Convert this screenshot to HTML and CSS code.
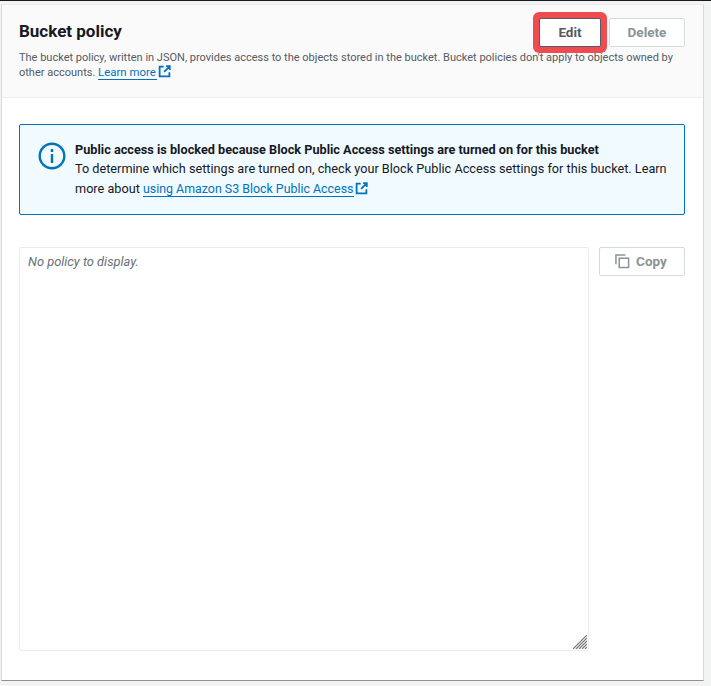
FILE: index.html
```html
<!DOCTYPE html>
<html lang="en">
<head>
    <meta charset="UTF-8">
    <meta name="viewport" content="width=device-width, initial-scale=1.0">
    <title>Bucket policy</title>
    <link rel="stylesheet" href="styles.css">
</head>
<body>
    <div class="card">
        <div class="card-header">
            <div class="header-top">
                <h2>Bucket policy</h2>
                <div class="actions">
                    <button class="btn btn-edit">Edit</button>
                    <button class="btn btn-disabled btn-delete">Delete</button>
                </div>
            </div>
            <p class="description">The bucket policy, written in JSON, provides access to the objects stored in the bucket. Bucket policies don't apply to objects owned by other accounts. <a href="#" class="link">Learn more</a><svg class="ext-icon" viewBox="0 0 16 16"><path d="M7 2H2v12h12V9M10 1.5h4.5V6M14.5 1.5L7.5 8.5"/></svg></p>
        </div>

        <div class="card-body">
            <div class="alert">
                <svg class="alert-icon" viewBox="0 0 28 28"><circle cx="14" cy="14" r="12.3"/><path d="M14 12v9M14 7v3"/></svg>
                <div class="alert-text">
                    <strong>Public access is blocked because Block Public Access settings are turned on for this bucket</strong>
                    <p>To determine which settings are turned on, check your Block Public Access settings for this bucket. Learn more about <a href="#" class="link">using Amazon S3 Block Public Access</a><svg class="ext-icon" viewBox="0 0 16 16"><path d="M7 2H2v12h12V9M10 1.5h4.5V6M14.5 1.5L7.5 8.5"/></svg></p>
                </div>
            </div>

            <div class="policy-row">
                <div class="policy-box">
                    <span class="placeholder">No policy to display.</span>
                    <svg class="resize-grip" viewBox="0 0 14 14"><path d="M0 14L14 0M3 14L14 3M6 14L14 6M9 14L14 9M12 14L14 12"/></svg>
                </div>
                <button class="btn btn-disabled btn-copy">
                    <svg class="copy-icon" viewBox="0 0 16 16"><path d="M1 11V1h10"/><path d="M4.5 4.5h10v10h-10z"/></svg>
                    Copy
                </button>
            </div>
        </div>
    </div>
</body>
</html>
```

FILE: styles.css
```css
* {
    margin: 0;
    padding: 0;
    box-sizing: border-box;
}

html, body {
    height: 100%;
}

body {
    font-family: Roboto, 'Open Sans', sans-serif;
    background: #f2f3f3;
    border-top: 1px solid #16191f;
    padding: 3px 7px 5px 1px;
    color: #16191f;
    font-size: 12.7px;
}

.card {
    background: #fff;
    height: 100%;
    border-left: 1px solid #d5dbdb;
    border-right: 1px solid #d5dbdb;
    border-bottom: 1px solid #879596;
    border-top: 1px solid #eaeded;
}

.card-header {
    background: #fafafa;
    height: 93px;
    border-bottom: 1px solid #eaeded;
    padding: 13px 18px 0 17px;
}

.header-top {
    display: flex;
    justify-content: space-between;
    align-items: flex-start;
    height: 33px;
}

h2 {
    font-size: 17px;
    font-weight: 700;
    line-height: 27px;
}

.actions {
    display: flex;
    gap: 8px;
}

.btn {
    font-family: inherit;
    font-size: 13.5px;
    font-weight: 700;
    background: #fff;
    border-radius: 2px;
    height: 29px;
    padding-bottom: 1px;
}

.btn-edit {
    width: 62px;
    color: #545b64;
    border: 1px solid #545b64;
    box-shadow: 0 0 0 6px #ee4c50;
    border-radius: 2px;
}

.btn-disabled {
    color: #879596;
    border: 1px solid #d5dbdb;
}

.btn-delete {
    width: 76px;
}

.description {
    font-size: 11px;
    line-height: 14px;
    color: #545b64;
    width: 665px;
}

.description .link {
    font-size: 11.4px;
}

.link {
    color: #0073bb;
    text-decoration: none;
    border-bottom: 1px solid #0073bb;
    padding-right: 1px;
}

.ext-icon {
    width: 13px;
    height: 13px;
    margin-left: 1px;
    vertical-align: -2px;
    fill: none;
    stroke: #0073bb;
    stroke-width: 2.2;
}

.card-body {
    padding: 26px 18px 0 17px;
}

.alert {
    display: flex;
    gap: 9px;
    height: 91px;
    padding: 15px 10px 0 18px;
    background: #f1faff;
    border: 1px solid #0073bb;
    border-radius: 2px;
    margin-bottom: 32px;
}

.alert-icon {
    flex: none;
    width: 28px;
    height: 28px;
    margin-top: 2px;
    fill: none;
    stroke: #0073bb;
    stroke-width: 2.4;
}

.alert-text {
    line-height: 20px;
}

.alert-text strong {
    display: block;
    line-height: 19px;
}

.alert-text .link {
    font-size: 12.4px;
}

.policy-row {
    display: flex;
    align-items: flex-start;
    gap: 10px;
}

.policy-box {
    position: relative;
    width: 570px;
    height: 404px;
    border: 1px solid #eaeded;
    padding: 6px 8px;
    border-radius: 2px;
}

.placeholder {
    font-style: italic;
    color: #687078;
    font-size: 12.85px;
}

.resize-grip {
    position: absolute;
    right: 1px;
    bottom: 1px;
    width: 14px;
    height: 14px;
    fill: none;
    stroke: #777;
    stroke-width: 1.2;
}

.btn-copy {
    width: 86px;
    display: flex;
    align-items: center;
    justify-content: center;
    gap: 6px;
    padding-right: 2px;
}

.copy-icon {
    width: 15px;
    height: 15px;
    fill: none;
    stroke: #879596;
    stroke-width: 1.6;
}
```
